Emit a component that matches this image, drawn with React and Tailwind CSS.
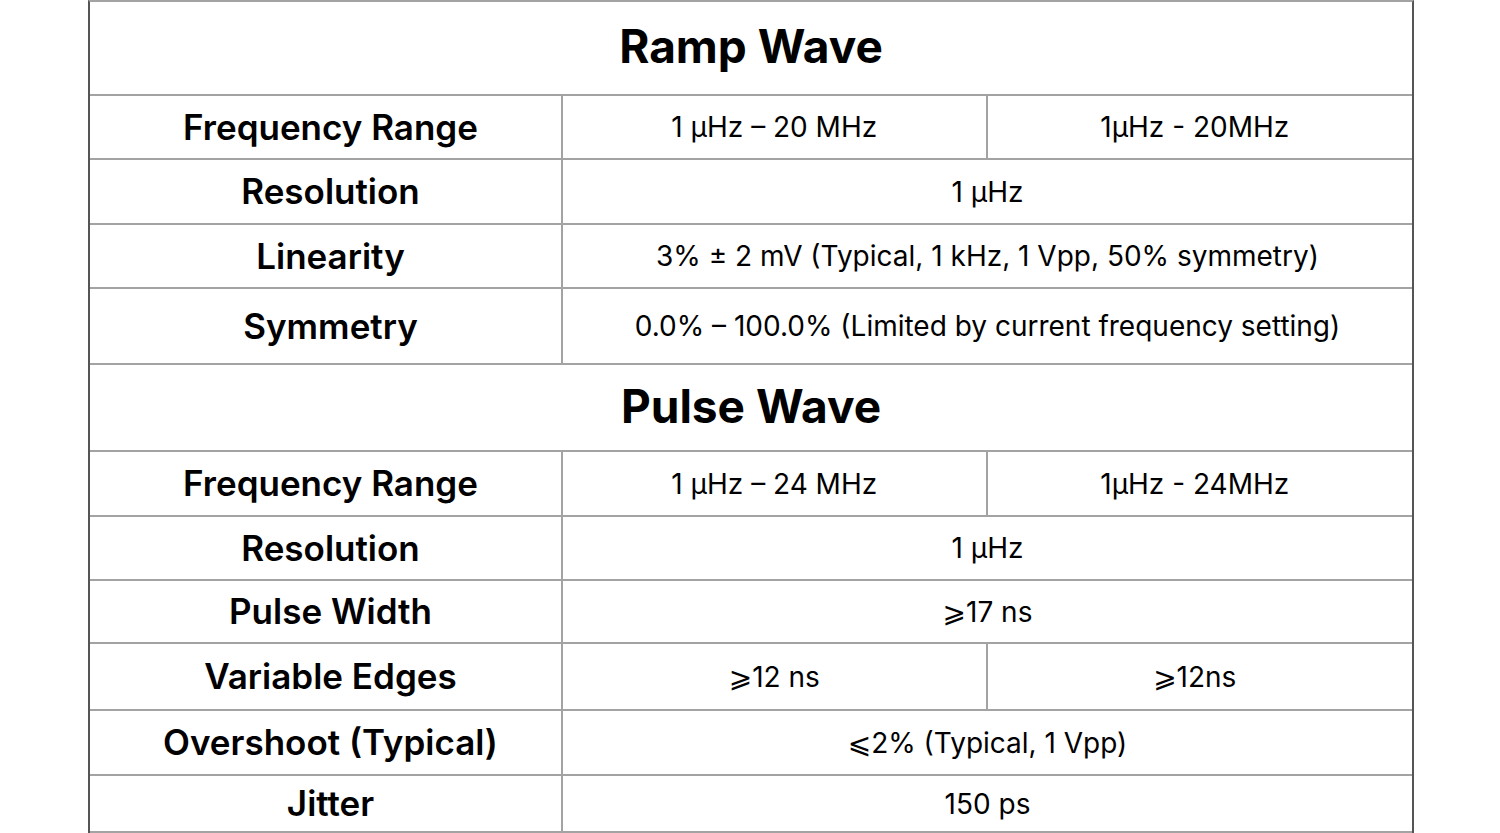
import React from "react";

const font = { fontFamily: "Inter, 'Noto Sans', 'DejaVu Sans', sans-serif" };

// rows: [label, value] or [label, value, value2]; h = row height incl. bottom line
const ramp = [
  { h: "h-[64px]", label: "Frequency Range", a: "1 μHz – 20 MHz", b: "1μHz - 20MHz" },
  { h: "h-[65px]", label: "Resolution", a: "1 μHz" },
  { h: "h-[64px]", label: "Linearity", a: "3% ± 2 mV (Typical, 1 kHz, 1 Vpp, 50% symmetry)" },
  { h: "h-[76px]", label: "Symmetry", a: "0.0% – 100.0% (Limited by current frequency setting)" },
];

const pulse = [
  { h: "h-[65px]", label: "Frequency Range", a: "1 μHz – 24 MHz", b: "1μHz - 24MHz" },
  { h: "h-[64px]", label: "Resolution", a: "1 μHz" },
  { h: "h-[63px]", label: "Pulse Width", a: "⩾17 ns" },
  { h: "h-[67px]", label: "Variable Edges", a: "⩾12 ns", b: "⩾12ns" },
  { h: "h-[65px]", label: "Overshoot (Typical)", a: "⩽2% (Typical, 1 Vpp)" },
  { h: "h-[57px]", label: "Jitter", a: "150 ps" },
];

const TitleRow = ({ h, children }) => (
  <div className={`${h} flex items-center justify-center pb-[3px] border-b-2 border-[#a3a3a3]`}>
    <span className="text-[46px] font-bold text-black">{children}</span>
  </div>
);

const SpecRow = ({ row }) => (
  <div className={`${row.h} grid grid-cols-[473px_1fr] border-b-2 border-[#a3a3a3]`}>
    <div className="flex items-center justify-center pl-[10px] border-r-2 border-[#a3a3a3] text-[35px] font-semibold text-black">
      {row.label}
    </div>
    {row.b ? (
      <div className="grid grid-cols-2">
        <div className="flex items-center justify-center border-r-2 border-[#a3a3a3] text-[28px] text-black">{row.a}</div>
        <div className="flex items-center justify-center pr-[10px] text-[28px] text-black">{row.b}</div>
      </div>
    ) : (
      <div className="flex items-center justify-center text-[28px] text-black">{row.a}</div>
    )}
  </div>
);

export default function App() {
  return (
    <div className="w-[1500px] h-[833px] overflow-hidden bg-white" style={font}>
      <div className="ml-[88px] w-[1326px] border-x-2 border-t-2 border-x-[#555] border-t-[#a3a3a3]">
        <TitleRow h="h-[94px]">Ramp Wave</TitleRow>
        {ramp.map((r) => (
          <SpecRow key={"r" + r.label} row={r} />
        ))}
        <TitleRow h="h-[87px]">Pulse Wave</TitleRow>
        {pulse.map((r) => (
          <SpecRow key={"p" + r.label} row={r} />
        ))}
      </div>
    </div>
  );
}
